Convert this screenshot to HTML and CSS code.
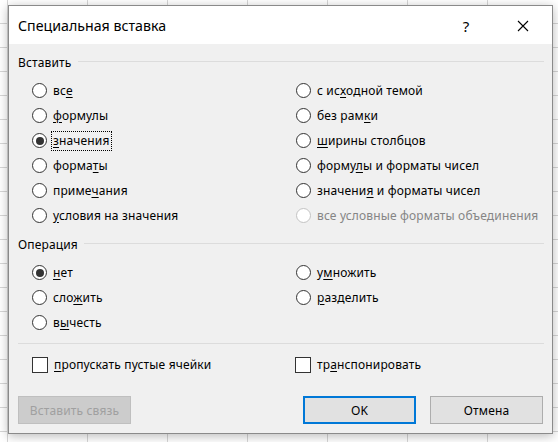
FILE: index.html
```html
<!DOCTYPE html>
<html lang="ru">
<head>
<meta charset="utf-8">
<title>Специальная вставка</title>
<link rel="stylesheet" href="styles.css">
</head>
<body>
<div class="dialog">
  <div class="titlebar">
    <span class="title">Специальная вставка</span>
    <span class="help">?</span>
    <svg class="close" width="12" height="12" viewBox="0 0 12 12"><path d="M1 1L11 11M11 1L1 11" stroke="#000" stroke-width="1.1" fill="none"/></svg>
  </div>
  <div class="content">
    <div class="group-head"><span>Вставить</span><i class="rule"></i></div>
    <div class="options six">
      <div class="opt"><span class="radio"></span><span class="lbl">вс<u>е</u></span></div>
      <div class="opt"><span class="radio"></span><span class="lbl"><u>ф</u>ормулы</span></div>
      <div class="opt"><span class="radio checked"></span><span class="lbl focus"><u>з</u>начения</span></div>
      <div class="opt"><span class="radio"></span><span class="lbl">форма<u>т</u>ы</span></div>
      <div class="opt"><span class="radio"></span><span class="lbl">приме<u>ч</u>ания</span></div>
      <div class="opt"><span class="radio"></span><span class="lbl"><u>у</u>словия на значения</span></div>
      <div class="opt"><span class="radio"></span><span class="lbl">с ис<u>х</u>одной темой</span></div>
      <div class="opt"><span class="radio"></span><span class="lbl">без рам<u>к</u>и</span></div>
      <div class="opt"><span class="radio"></span><span class="lbl"><u>ш</u>ирины столбцов</span></div>
      <div class="opt"><span class="radio"></span><span class="lbl">форму<u>л</u>ы и форматы чисел</span></div>
      <div class="opt"><span class="radio"></span><span class="lbl">значени<u>я</u> и форматы чисел</span></div>
      <div class="opt disabled"><span class="radio"></span><span class="lbl">все условные форматы объединения</span></div>
    </div>
    <div class="group-head second"><span>Операция</span><i class="rule"></i></div>
    <div class="options three">
      <div class="opt"><span class="radio checked"></span><span class="lbl"><u>н</u>ет</span></div>
      <div class="opt"><span class="radio"></span><span class="lbl">сло<u>ж</u>ить</span></div>
      <div class="opt"><span class="radio"></span><span class="lbl">в<u>ы</u>честь</span></div>
      <div class="opt"><span class="radio"></span><span class="lbl">у<u>м</u>ножить</span></div>
      <div class="opt"><span class="radio"></span><span class="lbl"><u>р</u>азделить</span></div>
    </div>
    <div class="separator"></div>
    <div class="checks">
      <div class="opt"><span class="checkbox"></span><span class="lbl"><u>п</u>ропускать пустые ячейки</span></div>
      <div class="opt"><span class="checkbox"></span><span class="lbl">тр<u>а</u>нспонировать</span></div>
    </div>
    <div class="buttons">
      <button class="btn disabled-btn">Вставить связь</button>
      <span class="spacer"></span>
      <button class="btn default-btn">OK</button>
      <button class="btn">Отмена</button>
    </div>
  </div>
</div>
</body>
</html>
```
FILE: styles.css
```css
html, body {
  margin: 0;
  padding: 0;
}
body {
  width: 558px;
  height: 442px;
  overflow: hidden;
  font-family: "Noto Sans", "Open Sans", sans-serif;
  font-size: 12px;
  letter-spacing: 0.15px;
  color: #000;
  background-color: #fff;
  background-image:
    repeating-linear-gradient(to right, transparent 0 7px, #d6d6d6 7px 8px, transparent 8px 80px),
    repeating-linear-gradient(to bottom, transparent 0 23px, #d6d6d6 23px 24px);
}
.dialog {
  margin: 5px 0 0 8px;
  width: 545px;
  box-sizing: border-box;
  border: 1px solid #8a8a8a;
  background: #f0f0f0;
  box-shadow: 0 2px 10px rgba(0, 0, 0, 0.28);
}
.titlebar {
  height: 38px;
  background: #fff;
  display: flex;
  align-items: center;
  padding-left: 9px;
}
.title {
  font-size: 14.2px;
  letter-spacing: 0;
  flex: 1;
  margin-top: 1px;
}
.help {
  font-size: 15px;
  width: 12px;
  text-align: center;
  margin-right: 45px;
  margin-top: 1px;
}
.close {
  margin-right: 23px;
  margin-top: 2px;
}
.content {
  padding: 6px 8px 9px 9px;
}
.group-head {
  height: 24px;
  display: flex;
  align-items: center;
}
.group-head.second {
  margin-top: 4px;
}
.rule {
  flex: 1;
  height: 1px;
  background: #dcdcdc;
  margin-left: 6px;
  margin-top: -1px;
}
.options {
  margin-top: 4px;
  padding-left: 14px;
  display: grid;
  grid-template-columns: 264px 1fr;
  grid-auto-flow: column;
  grid-auto-rows: 25px;
}
.options.six {
  grid-template-rows: repeat(6, 25px);
}
.options.three {
  grid-template-rows: repeat(3, 25px);
}
.opt {
  display: flex;
  align-items: center;
}
.radio {
  width: 15px;
  height: 15px;
  box-sizing: border-box;
  border: 1px solid #333;
  border-radius: 50%;
  background: #fff;
  margin-right: 4px;
  display: flex;
  align-items: center;
  justify-content: center;
  flex: none;
}
.radio.checked::after {
  content: "";
  width: 8px;
  height: 8px;
  border-radius: 50%;
  background: #333;
}
.lbl {
  padding: 0 2px;
  height: 20px;
  line-height: 20px;
  box-sizing: border-box;
  white-space: nowrap;
}
.lbl u {
  text-underline-offset: 2px;
}
.lbl.focus {
  outline: 1px dotted #000;
  outline-offset: -1px;
}
.disabled .radio {
  border-color: #c3c3c3;
}
.disabled .lbl {
  color: #858585;
}
.separator {
  margin-top: 8px;
  height: 1px;
  background: #dcdcdc;
}
.checks {
  margin-top: 8px;
  padding-left: 14px;
  display: grid;
  grid-template-columns: 263px 1fr;
  grid-auto-rows: 25px;
}
.checkbox {
  width: 16px;
  height: 16px;
  box-sizing: border-box;
  border: 1px solid #333;
  background: #fff;
  margin-right: 4px;
  flex: none;
}
.buttons {
  margin-top: 19px;
  display: flex;
  padding-right: 1px;
}
.spacer {
  flex: 1;
}
.btn {
  width: 113px;
  height: 28px;
  box-sizing: border-box;
  font-family: inherit;
  font-size: 12px;
  letter-spacing: 0.15px;
  color: #000;
  background: #e1e1e1;
  border: 1px solid #adadad;
  padding: 0;
  margin: 0;
}
.btn + .btn {
  margin-left: 14px;
}
.default-btn {
  border: 2px solid #0078d7;
}
.disabled-btn {
  background: #cccccc;
  border-color: #bfbfbf;
  color: #a0a0a0;
}
```
